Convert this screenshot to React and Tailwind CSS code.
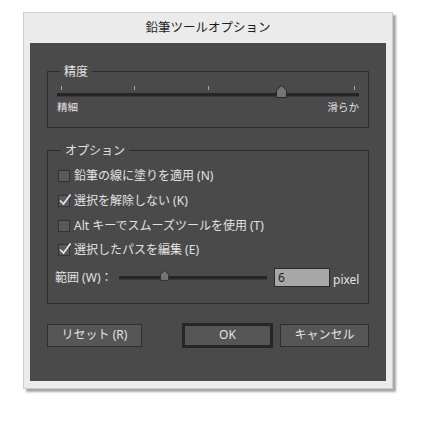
import { useState } from 'react'

const font = "font-['Noto_Sans','Noto_Sans_CJK_JP',sans-serif]"

function Thumb({ className }) {
    return (
        <svg viewBox="0 0 11 13" className={className}>
            <polygon points="0.5,12.5 0.5,5 5.5,0.5 10.5,5 10.5,12.5" fill="#747474" stroke="#262626" />
        </svg>
    )
}

function Check({ checked, label }) {
    return (
        <div className="flex items-center h-[24.7px]">
            <span className="relative w-[12px] h-[12px] shrink-0 bg-[#5a5a5a] border border-[#333]">
                {checked && (
                    <svg viewBox="0 0 14 14" className="absolute -left-[1px] -top-[3px] w-[14px] h-[14px]">
                        <path d="M2 7.5 L5.5 11 L12.5 1.5" fill="none" stroke="#e8e8e8" strokeWidth="1.7" />
                    </svg>
                )}
            </span>
            <span className="ml-[4px] text-[12px] leading-none text-[#e2e2e2]">{label}</span>
        </div>
    )
}

export default function App() {
    const [opts] = useState([
        { label: '鉛筆の線に塗りを適用 (N)', checked: false },
        { label: '選択を解除しない (K)', checked: true },
        { label: 'Alt キーでスムーズツールを使用 (T)', checked: false },
        { label: '選択したパスを編集 (E)', checked: true },
    ])

    return (
        <div className={`w-[428px] h-[432px] bg-white pt-[12px] pl-[23px] ${font}`}>
            <div className="w-[370px] bg-[#ebebeb] border border-[#cdcdcd] shadow-[3px_3px_2px_rgba(0,0,0,0.35)] px-[6px] pb-[7px]">
                {/* Title */}
                <div className="h-[30px] flex items-center justify-center text-[12.5px] text-[#1e1e1e]">
                    鉛筆ツールオプション
                </div>

                {/* Dark panel */}
                <div className="bg-[#4a4a4a] px-[17px] pt-[20px] pb-[33px] text-[#e2e2e2]">
                    {/* 精度 */}
                    <fieldset className="border border-[#2c2c2c] px-[9px] pb-[13px]">
                        <legend className="ml-[3px] px-[4px] text-[12px] leading-[17px] text-[#e2e2e2]">精度</legend>
                        <div className="relative mt-[6px]">
                            <div className="flex justify-between px-[4px] h-[5px]">
                                {[0, 1, 2, 3, 4].map((i) => (
                                    <span key={i} className="w-px h-[4px] bg-[#a8a8a8]" />
                                ))}
                            </div>
                            <div className="mt-[2px] h-[4px] bg-[#262626] border-b border-[#3a3a3a]" />
                            <Thumb className="absolute left-[219px] top-[-1px] w-[11px] h-[13px]" />
                        </div>
                        <div className="flex justify-between mt-[4px] text-[10.5px] leading-[13px]">
                            <span>精細</span>
                            <span>滑らか</span>
                        </div>
                    </fieldset>

                    {/* オプション */}
                    <fieldset className="mt-[14px] border border-[#2c2c2c] pl-[10px] pr-[9px] pb-[15px]">
                        <legend className="ml-[3px] px-[4px] text-[12px] leading-[17px] text-[#e2e2e2]">オプション</legend>
                        <div className="mt-[5px]">
                            {opts.map((o) => (
                                <Check key={o.label} {...o} />
                            ))}
                        </div>
                        <div className="flex items-center h-[20px] mt-[5px] -ml-[3px]">
                            <span className="text-[12px] leading-none w-[64px] shrink-0">範囲 (W)：</span>
                            <div className="relative w-[148px] h-[4px] bg-[#262626] border-b border-[#3a3a3a]">
                                <Thumb className="absolute left-[41px] top-[-6px] w-[9px] h-[11px]" />
                            </div>
                            <div className="ml-[7px] w-[56px] h-[19px] bg-[#a7a7a7] border border-[#2a2a2a] text-[12px] leading-[17px] text-[#1e1e1e] pl-[3px]">
                                6
                            </div>
                            <span className="ml-[3px] text-[12px] leading-none mt-[4px]">pixel</span>
                        </div>
                    </fieldset>

                    {/* Buttons */}
                    <div className="flex items-center mt-[19px] text-[12px]">
                        <button className="w-[95px] h-[23px] bg-[#565656] border border-[#2e2e2e] text-[#e2e2e2] leading-none">
                            リセット (R)
                        </button>
                        <button className="ml-auto w-[91px] h-[25px] bg-[#565656] border-[3px] border-[#262626] text-[#e2e2e2] leading-none">
                            OK
                        </button>
                        <button className="ml-[7px] w-[89px] h-[23px] bg-[#565656] border border-[#2e2e2e] text-[#e2e2e2] leading-none">
                            キャンセル
                        </button>
                    </div>
                </div>
            </div>
        </div>
    )
}
